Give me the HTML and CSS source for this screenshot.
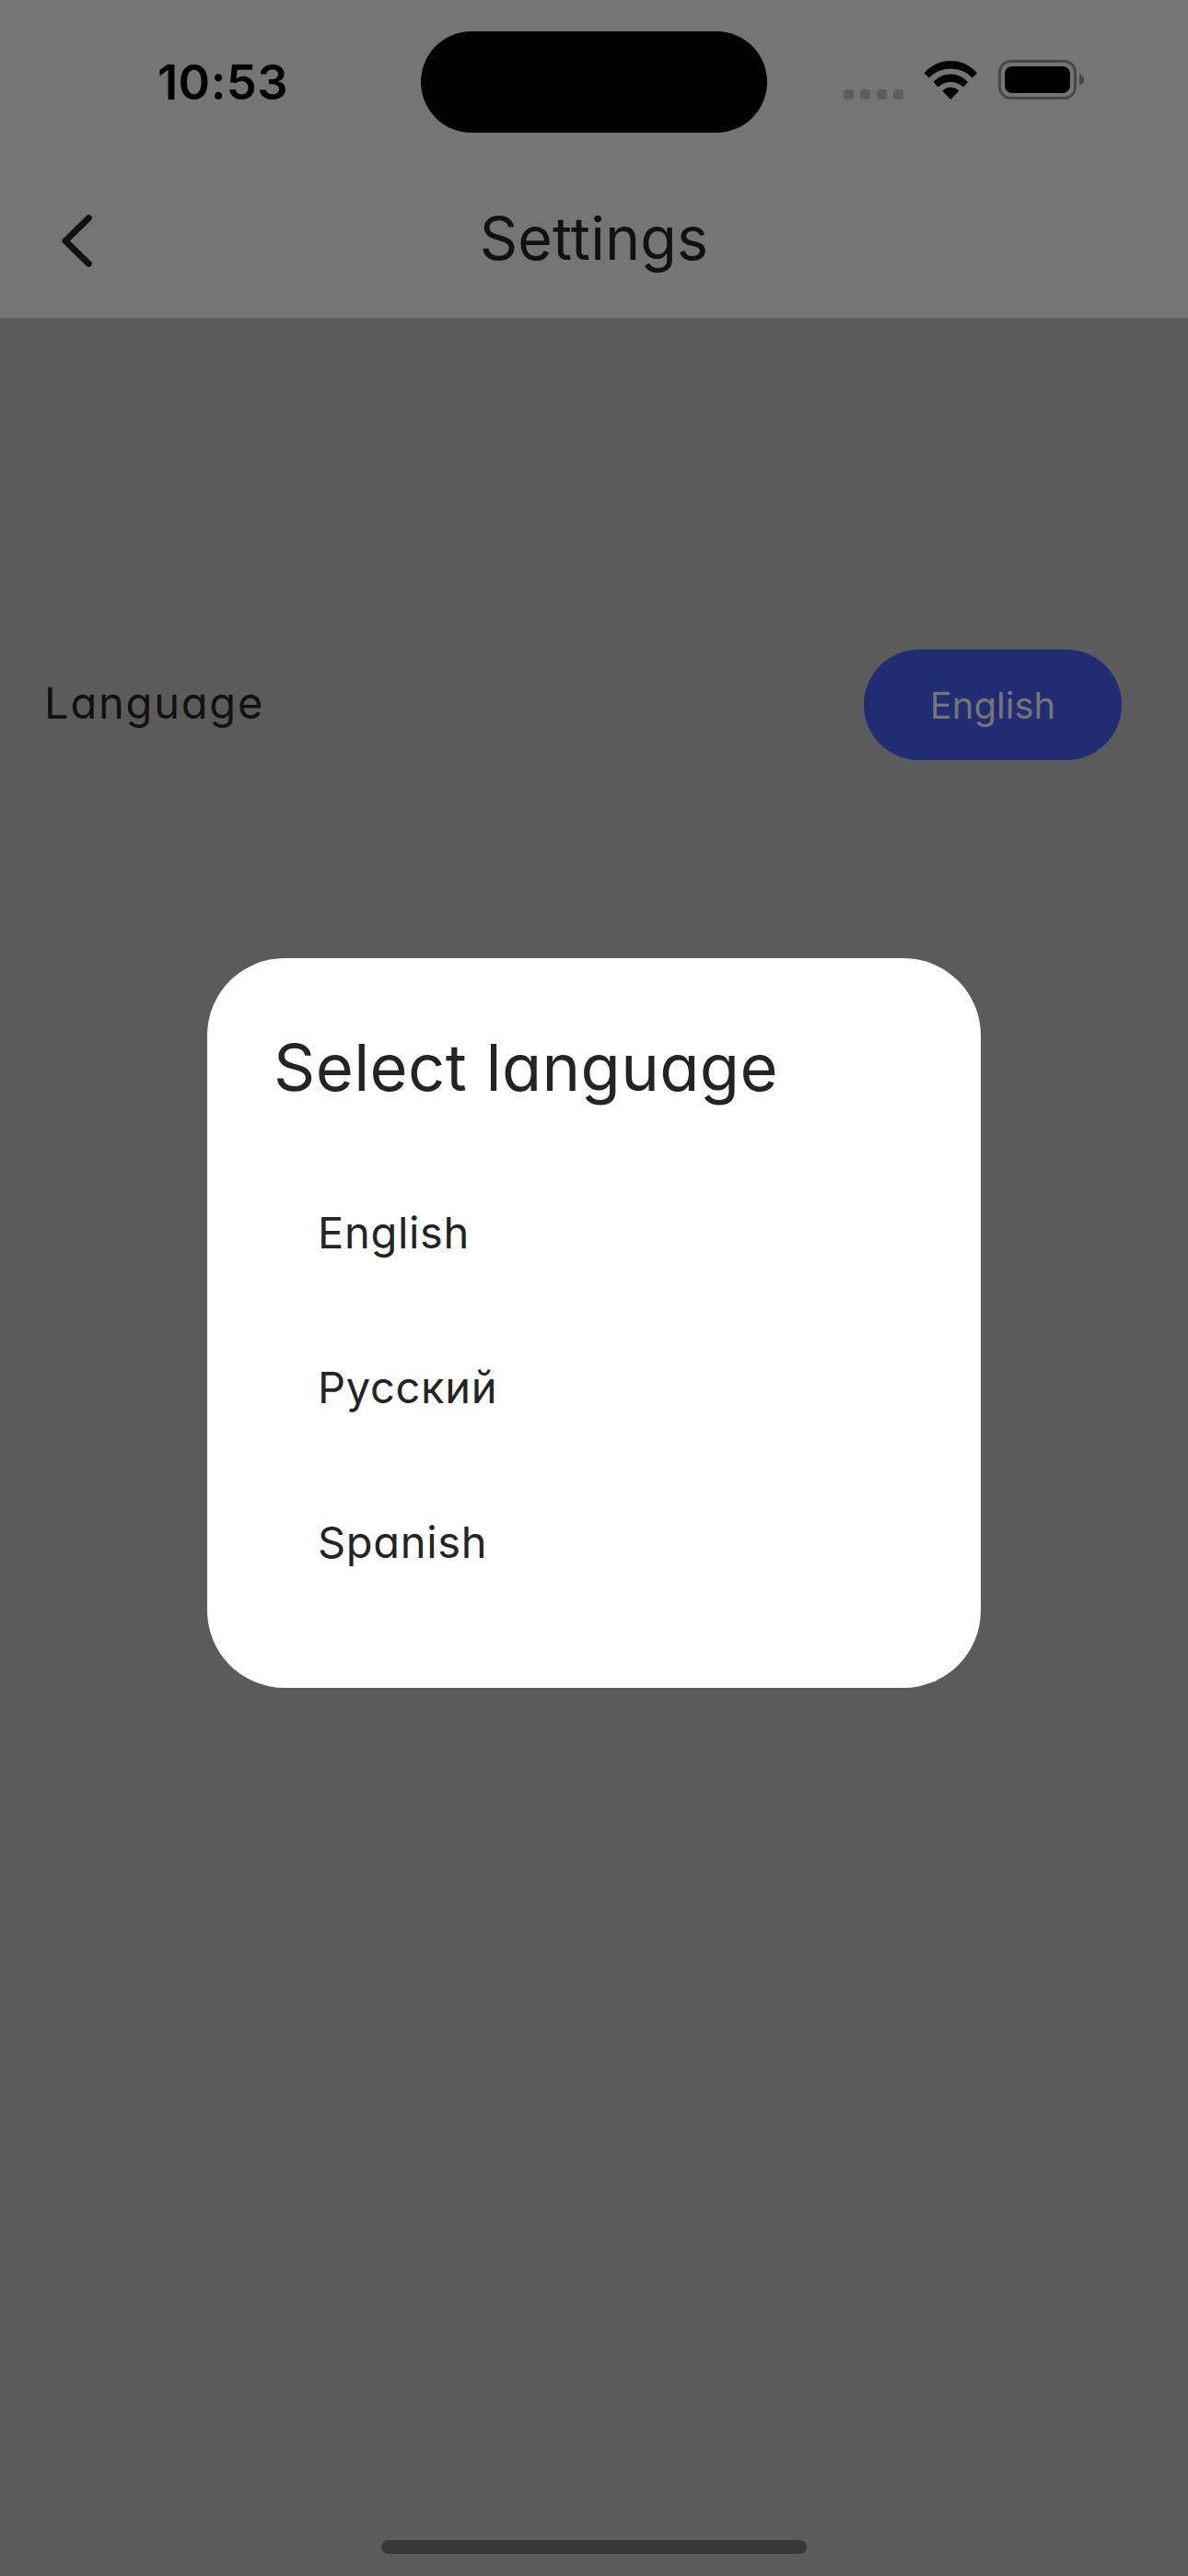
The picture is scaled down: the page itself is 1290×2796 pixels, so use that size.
FILE: index.html
```html
<!DOCTYPE html>
<html lang="en">
<head>
<meta charset="utf-8">
<title>Settings</title>
<link rel="stylesheet" href="styles.css">
</head>
<body>
<div class="screen">
  <header class="top">
    <div class="status">
      <span class="time">10:53</span>
      <span class="island"></span>
      <div class="indicators">
        <span class="dots"><i></i><i></i><i></i><i></i></span>
        <svg class="wifi" width="59" height="44" viewBox="0 0 59 44"><path d="M.6 14.4A37.6 37.6 0 0 1 58 14.4L52.8 19.4A33 33 0 0 0 5.8 19.4ZM10.5 24.1A24.8 24.8 0 0 1 48.1 24.1L43.1 29.6A20 20 0 0 0 15.5 29.6ZM20.4 33.8A11.8 11.8 0 0 1 38.2 33.8L29.3 43Z"/></svg>
        <svg class="battery" width="94" height="43" viewBox="0 0 94 43"><rect x="1.5" y="1.5" width="82" height="40" rx="12" fill="none" stroke="#474747" stroke-width="3"/><rect x="7" y="7" width="71" height="29" rx="8" fill="#000"/><path d="M88 15Q93 17 93 21.5T88 28Z" fill="#474747"/></svg>
      </div>
    </div>
    <div class="bar">
      <svg class="back" width="33" height="57" viewBox="0 0 33 57"><path d="M29.3 3.7L4 28.5L29.3 53.3" fill="none" stroke="#111" stroke-width="7" stroke-linecap="round" stroke-linejoin="round"/></svg>
      <h1 class="heading">Settings</h1>
    </div>
  </header>
  <main class="content">
    <div class="row">
      <span class="label">Language</span>
      <button class="pill">English</button>
    </div>
  </main>
  <div class="modal">
    <section class="dialog">
      <h2 class="title">Select language</h2>
      <ul class="options">
        <li>English</li>
        <li>Русский</li>
        <li>Spanish</li>
      </ul>
    </section>
  </div>
  <div class="home"></div>
</div>
</body>
</html>
```
FILE: styles.css
```css
* { box-sizing: border-box; margin: 0; padding: 0; }
body { font-family: Inter, "Noto Sans", sans-serif; font-feature-settings: "cv11"; background: #5b5b5b; }
.screen { position: relative; display: flex; flex-direction: column; width: 1290px; height: 2796px; background: #5b5b5b; overflow: hidden; color: #111; }
.top { height: 345px; background: #757575; }
.status { display: grid; grid-template-columns: 457px 376px 457px; align-items: center; height: 177px; }
.time { padding: 1px 0 0 171px; font-size: 52.5px; font-weight: 600; line-height: 60px; letter-spacing: 0.4px; color: #000; }
.island { height: 110px; border-radius: 55px; background: #000; }
.indicators { display: flex; align-items: center; padding-left: 83px; height: 44px; margin-bottom: 4px; }
.dots { display: flex; gap: 7px; align-self: flex-end; width: 87px; padding-bottom: 1px; }
.dots i { width: 11px; height: 11px; border-radius: 4px; background: #5d5d5d; }
.battery { margin-left: 22px; }
.bar { display: grid; grid-template-columns: 33px 1fr 33px; align-items: center; height: 168px; padding: 0 67px; }
.heading { text-align: center; font-size: 64.5px; font-weight: 400; line-height: 80px; letter-spacing: 0.2px; padding-bottom: 4px; }
.content { flex: 1; padding: 360px 72px 0 48px; }
.row { display: flex; align-items: center; justify-content: space-between; }
.label { font-size: 47px; line-height: 60px; letter-spacing: 1.8px; padding-bottom: 5px; }
.pill { width: 280px; height: 120px; border: 0; border-radius: 60px; background: #202d73; color: #757575; font-family: inherit; font-feature-settings: inherit; font-size: 40px; }
.modal { position: absolute; inset: 0; display: flex; justify-content: center; align-items: flex-start; padding-top: 1039.5px; }
.dialog { width: 840px; height: 792px; padding: 71px 72px; border-radius: 84px; background: #fff; color: #242424; }
.title { font-size: 70.5px; font-weight: 400; line-height: 96px; letter-spacing: 0.4px; }
.options { list-style: none; margin-top: 47px; padding-left: 48px; }
.options li { height: 168px; line-height: 168px; font-size: 47px; letter-spacing: 0.7px; }
.home { align-self: center; width: 462px; height: 15px; margin-bottom: 24px; border-radius: 8px; background: #383838; }
```
